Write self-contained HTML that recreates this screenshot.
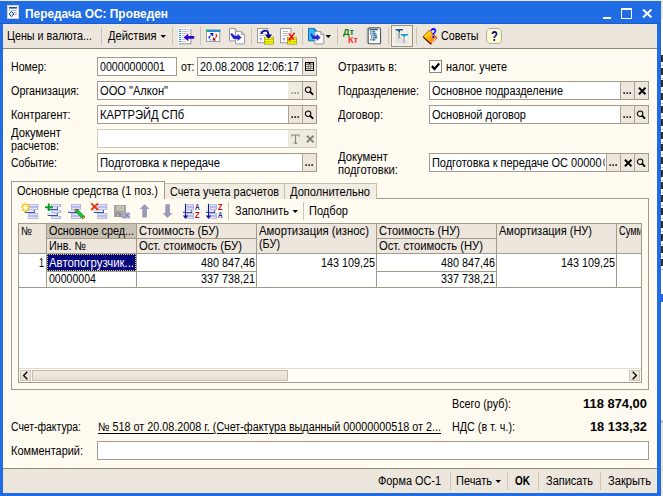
<!DOCTYPE html><html><head><meta charset="utf-8"><title>Передача ОС</title><style>
html,body{margin:0;padding:0}
body{width:663px;height:496px;overflow:hidden;position:relative;background:#ECE9D8;font-family:"Liberation Sans",sans-serif;font-size:12px;color:#000}
.b{position:absolute;display:block}
.t{position:absolute;white-space:nowrap;line-height:14px;transform-origin:0 0;display:block}
.bd{font-weight:bold}
.w{color:#fff}
.u{text-decoration:underline;text-underline-offset:2px;text-decoration-thickness:1px}
.g{color:#8a8478}
.clip{width:2.2px;overflow:hidden}

</style></head><body>
<div class="b" style="left:0px;top:1px;width:661px;height:495px;background:#1F6CE4;"></div>
<div class="b" style="left:3px;top:24px;width:654px;height:469px;background:#FFFBF0;"></div>
<div class="b" style="left:661px;top:20px;width:2px;height:400px;background:#fff;"></div>
<div class="b" style="left:661px;top:55px;width:2px;height:7px;background:#2A2A2A;"></div>
<div class="b" style="left:661px;top:65px;width:2px;height:1px;background:#C8C8C8;"></div>
<div class="b" style="left:661px;top:68px;width:2px;height:7px;background:#2A2A2A;"></div>
<div class="b" style="left:661px;top:78px;width:2px;height:1px;background:#C8C8C8;"></div>
<div class="b" style="left:661px;top:80px;width:2px;height:7px;background:#2A2A2A;"></div>
<div class="b" style="left:661px;top:90px;width:2px;height:1px;background:#C8C8C8;"></div>
<div class="b" style="left:661px;top:93px;width:2px;height:7px;background:#2A2A2A;"></div>
<div class="b" style="left:661px;top:103px;width:2px;height:1px;background:#C8C8C8;"></div>
<div class="b" style="left:661px;top:106px;width:2px;height:7px;background:#2A2A2A;"></div>
<div class="b" style="left:661px;top:116px;width:2px;height:1px;background:#C8C8C8;"></div>
<div class="b" style="left:661px;top:119px;width:2px;height:7px;background:#2A2A2A;"></div>
<div class="b" style="left:661px;top:129px;width:2px;height:1px;background:#C8C8C8;"></div>
<div class="b" style="left:661px;top:132px;width:2px;height:7px;background:#2A2A2A;"></div>
<div class="b" style="left:661px;top:142px;width:2px;height:1px;background:#C8C8C8;"></div>
<div class="b" style="left:661px;top:144px;width:2px;height:7px;background:#2A2A2A;"></div>
<div class="b" style="left:661px;top:154px;width:2px;height:1px;background:#C8C8C8;"></div>
<div class="b" style="left:661px;top:157px;width:2px;height:7px;background:#2A2A2A;"></div>
<div class="b" style="left:661px;top:167px;width:2px;height:1px;background:#C8C8C8;"></div>
<div class="b" style="left:661px;top:170px;width:2px;height:7px;background:#2A2A2A;"></div>
<div class="b" style="left:661px;top:180px;width:2px;height:1px;background:#C8C8C8;"></div>
<div class="b" style="left:661px;top:182px;width:2px;height:7px;background:#2A2A2A;"></div>
<div class="b" style="left:661px;top:192px;width:2px;height:1px;background:#C8C8C8;"></div>
<div class="b" style="left:661px;top:195px;width:2px;height:7px;background:#2A2A2A;"></div>
<div class="b" style="left:661px;top:205px;width:2px;height:1px;background:#C8C8C8;"></div>
<div class="b" style="left:661px;top:208px;width:2px;height:7px;background:#2A2A2A;"></div>
<div class="b" style="left:661px;top:218px;width:2px;height:1px;background:#C8C8C8;"></div>
<div class="b" style="left:661px;top:221px;width:2px;height:7px;background:#2A2A2A;"></div>
<div class="b" style="left:661px;top:231px;width:2px;height:1px;background:#C8C8C8;"></div>
<div class="b" style="left:661px;top:234px;width:2px;height:7px;background:#2A2A2A;"></div>
<div class="b" style="left:661px;top:244px;width:2px;height:1px;background:#C8C8C8;"></div>
<div class="b" style="left:661px;top:246px;width:2px;height:7px;background:#2A2A2A;"></div>
<div class="b" style="left:661px;top:256px;width:2px;height:1px;background:#C8C8C8;"></div>
<div class="b" style="left:661px;top:259px;width:2px;height:7px;background:#2A2A2A;"></div>
<div class="b" style="left:661px;top:269px;width:2px;height:1px;background:#C8C8C8;"></div>
<div class="b" style="left:661px;top:294px;width:2px;height:8px;background:#2A62D8;"></div>
<div class="b" style="left:661px;top:420px;width:2px;height:3px;background:#C8C4B8;"></div>
<div class="b" style="left:3px;top:24px;width:654px;height:24px;background:#ECE6DC;"></div>
<div class="b" style="left:3px;top:48px;width:654px;height:1px;background:#8E8573;"></div>
<div class="b" style="left:3px;top:468px;width:654px;height:1px;background:#8E8573;"></div>
<div class="b" style="left:3px;top:469px;width:654px;height:24px;background:#ECE6DC;"></div>
<div class="b" style="left:0px;top:23px;width:661px;height:1px;background:#1B5BCB;"></div>
<div class="b" style="left:603px;top:17px;width:8px;height:2px;background:#fff;"></div>
<div class="b" style="left:621px;top:8px;width:11px;height:11px;border:1px solid #fff;border-top-width:2px;box-sizing:border-box;"></div>
<svg class="b" style="left:642px;top:9px" width="11" height="9" viewBox="0 0 11 9"><path d="M1 0.5 L9.5 8.5 M9.5 0.5 L1 8.5" stroke="#fff" stroke-width="2" fill="none"/></svg>
<div class="b" style="left:101px;top:27px;width:1px;height:18px;background:#CCC5B7;"></div>
<div class="b" style="left:172px;top:27px;width:1px;height:18px;background:#CCC5B7;"></div>
<div class="b" style="left:200px;top:27px;width:1px;height:18px;background:#CCC5B7;"></div>
<div class="b" style="left:251px;top:27px;width:1px;height:18px;background:#CCC5B7;"></div>
<div class="b" style="left:302px;top:27px;width:1px;height:18px;background:#CCC5B7;"></div>
<div class="b" style="left:337px;top:27px;width:1px;height:18px;background:#CCC5B7;"></div>
<div class="b" style="left:388px;top:27px;width:1px;height:18px;background:#CCC5B7;"></div>
<div class="b" style="left:416px;top:27px;width:1px;height:18px;background:#CCC5B7;"></div>
<svg class="b" style="left:160px;top:35px" width="7" height="4" viewBox="0 0 7 4"><path d="M0.5 0 H6 L3.25 3 Z" fill="#000"/></svg>
<svg class="b" style="left:325px;top:35px" width="7" height="4" viewBox="0 0 7 4"><path d="M0.5 0 H6 L3.25 3 Z" fill="#000"/></svg>
<div class="b" style="left:391px;top:25px;width:22px;height:22px;background:#F4F0E6;border:1px solid #9A917F;box-sizing:border-box;"></div>
<div class="b" style="left:97px;top:57px;width:80px;height:19px;background:#fff;border:1px solid #A29A8C;box-sizing:border-box;"></div>
<div class="b" style="left:197px;top:57px;width:120px;height:19px;background:#fff;border:1px solid #A29A8C;box-sizing:border-box;"></div>
<div class="b" style="left:302px;top:58px;width:1px;height:17px;background:#ACA494;"></div>
<div class="b" style="left:303px;top:58px;width:13px;height:17px;background:#ECE6DC;"></div>
<svg class="b" style="left:305px;top:62px" width="10" height="10" viewBox="0 0 10 10"><rect x="0.5" y="0.5" width="8" height="8" fill="#F0EBE0" stroke="#000" stroke-width="1"/><rect x="0" y="0" width="9" height="1.2" fill="#000"/><rect x="3.7" y="1" width="1.6" height="1.2" fill="#000"/><path d="M1 2.6 H8 M1 4.6 H8 M1 6.5 H8" stroke="#000" stroke-width="0.5" stroke-opacity="0.85"/><path d="M3.3 2.4 V8 M5.7 2.4 V8" stroke="#000" stroke-width="0.5" stroke-opacity="0.85"/></svg>
<div class="b" style="left:97px;top:81px;width:220px;height:19px;background:#fff;border:1px solid #A29A8C;box-sizing:border-box;"></div>
<div class="b" style="left:288px;top:82px;width:1px;height:17px;background:#EDE8DC;"></div>
<div class="b" style="left:289px;top:82px;width:13px;height:17px;background:#EFEBE2;"></div>
<svg class="b" style="left:290px;top:92px" width="11" height="3" viewBox="0 0 11 3"><rect x="1.4" y="0.3" width="1.5" height="1.6" fill="#8a8478"/><rect x="4.4" y="0.3" width="1.5" height="1.6" fill="#8a8478"/><rect x="7.4" y="0.3" width="1.5" height="1.6" fill="#8a8478"/></svg>
<div class="b" style="left:302px;top:82px;width:1px;height:17px;background:#ACA494;"></div>
<div class="b" style="left:303px;top:82px;width:13px;height:17px;background:#ECE6DC;"></div>
<svg class="b" style="left:304px;top:85px" width="13" height="12" viewBox="0 0 13 12"><circle cx="4.1" cy="4.8" r="2.75" fill="none" stroke="#000" stroke-width="1.05"/><path d="M6.3 7 L8.6 9.2" stroke="#000" stroke-width="1.8" stroke-linecap="round"/></svg>
<div class="b" style="left:97px;top:105px;width:220px;height:19px;background:#fff;border:1px solid #A29A8C;box-sizing:border-box;"></div>
<div class="b" style="left:288px;top:106px;width:1px;height:17px;background:#ACA494;"></div>
<div class="b" style="left:289px;top:106px;width:13px;height:17px;background:#ECE6DC;"></div>
<svg class="b" style="left:290px;top:116px" width="11" height="3" viewBox="0 0 11 3"><rect x="1.4" y="0.3" width="1.5" height="1.6" fill="#000"/><rect x="4.4" y="0.3" width="1.5" height="1.6" fill="#000"/><rect x="7.4" y="0.3" width="1.5" height="1.6" fill="#000"/></svg>
<div class="b" style="left:302px;top:106px;width:1px;height:17px;background:#ACA494;"></div>
<div class="b" style="left:303px;top:106px;width:13px;height:17px;background:#ECE6DC;"></div>
<svg class="b" style="left:304px;top:109px" width="13" height="12" viewBox="0 0 13 12"><circle cx="4.1" cy="4.8" r="2.75" fill="none" stroke="#000" stroke-width="1.05"/><path d="M6.3 7 L8.6 9.2" stroke="#000" stroke-width="1.8" stroke-linecap="round"/></svg>
<div class="b" style="left:97px;top:129px;width:220px;height:19px;background:#fff;border:1px solid #D0CABD;box-sizing:border-box;"></div>
<div class="b" style="left:288px;top:130px;width:1px;height:17px;background:#EDE8DC;"></div>
<div class="b" style="left:289px;top:130px;width:13px;height:17px;background:#EFEBE2;"></div>
<svg class="b" style="left:290px;top:133px" width="11" height="12" viewBox="0 0 11 12"><path d="M1.8 3.6 V2 H9.2 V3.6 M5.5 2 V10 M3.8 10.1 H7.2" stroke="#8a8478" stroke-width="1.1" fill="none"/></svg>
<div class="b" style="left:302px;top:130px;width:1px;height:17px;background:#EDE8DC;"></div>
<div class="b" style="left:303px;top:130px;width:13px;height:17px;background:#EFEBE2;"></div>
<svg class="b" style="left:306px;top:135px" width="9" height="8" viewBox="0 0 9 8"><path d="M0.9 0.8 L7.5 7.2 M7.5 0.8 L0.9 7.2" stroke="#8a8478" stroke-width="1.9" fill="none"/></svg>
<div class="b" style="left:97px;top:153px;width:220px;height:19px;background:#fff;border:1px solid #A29A8C;box-sizing:border-box;"></div>
<div class="b" style="left:302px;top:154px;width:1px;height:17px;background:#ACA494;"></div>
<div class="b" style="left:303px;top:154px;width:13px;height:17px;background:#ECE6DC;"></div>
<svg class="b" style="left:304px;top:164px" width="11" height="3" viewBox="0 0 11 3"><rect x="1.4" y="0.3" width="1.5" height="1.6" fill="#000"/><rect x="4.4" y="0.3" width="1.5" height="1.6" fill="#000"/><rect x="7.4" y="0.3" width="1.5" height="1.6" fill="#000"/></svg>
<div class="b" style="left:429px;top:60px;width:13px;height:13px;background:#fff;border:1px solid #8E8573;box-sizing:border-box;"></div>
<svg class="b" style="left:431px;top:62px" width="9" height="9" viewBox="0 0 9 9"><path d="M0.9 3.9 L3.5 6.9 L8.2 1.4" stroke="#000" stroke-width="2.3" fill="none"/></svg>
<div class="b" style="left:429px;top:81px;width:220px;height:19px;background:#fff;border:1px solid #A29A8C;box-sizing:border-box;"></div>
<div class="b" style="left:620px;top:82px;width:1px;height:17px;background:#ACA494;"></div>
<div class="b" style="left:621px;top:82px;width:13px;height:17px;background:#ECE6DC;"></div>
<svg class="b" style="left:622px;top:92px" width="11" height="3" viewBox="0 0 11 3"><rect x="1.4" y="0.3" width="1.5" height="1.6" fill="#000"/><rect x="4.4" y="0.3" width="1.5" height="1.6" fill="#000"/><rect x="7.4" y="0.3" width="1.5" height="1.6" fill="#000"/></svg>
<div class="b" style="left:634px;top:82px;width:1px;height:17px;background:#ACA494;"></div>
<div class="b" style="left:635px;top:82px;width:13px;height:17px;background:#ECE6DC;"></div>
<svg class="b" style="left:638px;top:87px" width="9" height="8" viewBox="0 0 9 8"><path d="M0.9 0.8 L7.5 7.2 M7.5 0.8 L0.9 7.2" stroke="#000" stroke-width="1.9" fill="none"/></svg>
<div class="b" style="left:429px;top:105px;width:220px;height:19px;background:#fff;border:1px solid #A29A8C;box-sizing:border-box;"></div>
<div class="b" style="left:620px;top:106px;width:1px;height:17px;background:#ACA494;"></div>
<div class="b" style="left:621px;top:106px;width:13px;height:17px;background:#ECE6DC;"></div>
<svg class="b" style="left:622px;top:116px" width="11" height="3" viewBox="0 0 11 3"><rect x="1.4" y="0.3" width="1.5" height="1.6" fill="#000"/><rect x="4.4" y="0.3" width="1.5" height="1.6" fill="#000"/><rect x="7.4" y="0.3" width="1.5" height="1.6" fill="#000"/></svg>
<div class="b" style="left:634px;top:106px;width:1px;height:17px;background:#ACA494;"></div>
<div class="b" style="left:635px;top:106px;width:13px;height:17px;background:#ECE6DC;"></div>
<svg class="b" style="left:636px;top:109px" width="13" height="12" viewBox="0 0 13 12"><circle cx="4.1" cy="4.8" r="2.75" fill="none" stroke="#000" stroke-width="1.05"/><path d="M6.3 7 L8.6 9.2" stroke="#000" stroke-width="1.8" stroke-linecap="round"/></svg>
<div class="b" style="left:429px;top:153px;width:220px;height:19px;background:#fff;border:1px solid #A29A8C;box-sizing:border-box;"></div>
<div class="b" style="left:606px;top:154px;width:1px;height:17px;background:#ACA494;"></div>
<div class="b" style="left:607px;top:154px;width:13px;height:17px;background:#ECE6DC;"></div>
<svg class="b" style="left:608px;top:164px" width="11" height="3" viewBox="0 0 11 3"><rect x="1.4" y="0.3" width="1.5" height="1.6" fill="#000"/><rect x="4.4" y="0.3" width="1.5" height="1.6" fill="#000"/><rect x="7.4" y="0.3" width="1.5" height="1.6" fill="#000"/></svg>
<div class="b" style="left:620px;top:154px;width:1px;height:17px;background:#ACA494;"></div>
<div class="b" style="left:621px;top:154px;width:13px;height:17px;background:#ECE6DC;"></div>
<svg class="b" style="left:624px;top:159px" width="9" height="8" viewBox="0 0 9 8"><path d="M0.9 0.8 L7.5 7.2 M7.5 0.8 L0.9 7.2" stroke="#000" stroke-width="1.9" fill="none"/></svg>
<div class="b" style="left:634px;top:154px;width:1px;height:17px;background:#ACA494;"></div>
<div class="b" style="left:635px;top:154px;width:13px;height:17px;background:#ECE6DC;"></div>
<svg class="b" style="left:636px;top:157px" width="13" height="12" viewBox="0 0 13 12"><circle cx="4.1" cy="4.8" r="2.75" fill="none" stroke="#000" stroke-width="1.05"/><path d="M6.3 7 L8.6 9.2" stroke="#000" stroke-width="1.8" stroke-linecap="round"/></svg>
<div class="b" style="left:11px;top:198px;width:638px;height:192px;background:#FFFBF0;border:1px solid #A29A8C;box-sizing:border-box;"></div>
<div class="b" style="left:164px;top:183px;width:121px;height:16px;background:#F2EDE2;border:1px solid #C6BFB0;box-sizing:border-box;border-bottom:none;"></div>
<div class="b" style="left:284px;top:183px;width:93px;height:16px;background:#F2EDE2;border:1px solid #C6BFB0;box-sizing:border-box;border-bottom:none;"></div>
<div class="b" style="left:11px;top:181px;width:154px;height:18px;background:#FFFBF0;border:1px solid #A29A8C;box-sizing:border-box;border-bottom:none;"></div>
<div class="b" style="left:228px;top:202px;width:1px;height:18px;background:#CCC5B7;"></div>
<div class="b" style="left:303px;top:202px;width:1px;height:18px;background:#CCC5B7;"></div>
<svg class="b" style="left:292px;top:210px" width="7" height="4" viewBox="0 0 7 4"><path d="M0.5 0 H6 L3.25 3 Z" fill="#000"/></svg>
<div class="b" style="left:18px;top:223px;width:624px;height:160px;background:#fff;border:1px solid #A29A8C;box-sizing:border-box;"></div>
<div class="b" style="left:19px;top:224px;width:622px;height:29px;background:#ECE6DC;"></div>
<div class="b" style="left:47px;top:224px;width:89px;height:14px;background:#C9C2B4;"></div>
<div class="b" style="left:46px;top:224px;width:1px;height:63px;background:#A29A8C;"></div>
<div class="b" style="left:136px;top:224px;width:1px;height:63px;background:#A29A8C;"></div>
<div class="b" style="left:256px;top:224px;width:1px;height:63px;background:#A29A8C;"></div>
<div class="b" style="left:376px;top:224px;width:1px;height:63px;background:#A29A8C;"></div>
<div class="b" style="left:496px;top:224px;width:1px;height:63px;background:#A29A8C;"></div>
<div class="b" style="left:616px;top:224px;width:1px;height:63px;background:#A29A8C;"></div>
<div class="b" style="left:19px;top:253px;width:622px;height:1px;background:#A29A8C;"></div>
<div class="b" style="left:47px;top:238px;width:89px;height:1px;background:#A29A8C;"></div>
<div class="b" style="left:137px;top:238px;width:119px;height:1px;background:#A29A8C;"></div>
<div class="b" style="left:377px;top:238px;width:119px;height:1px;background:#A29A8C;"></div>
<div class="b" style="left:47px;top:271px;width:89px;height:1px;background:#A29A8C;"></div>
<div class="b" style="left:137px;top:271px;width:119px;height:1px;background:#A29A8C;"></div>
<div class="b" style="left:377px;top:271px;width:119px;height:1px;background:#A29A8C;"></div>
<div class="b" style="left:19px;top:287px;width:622px;height:1px;background:#A29A8C;"></div>
<div class="b" style="left:642px;top:224px;width:6px;height:29px;background:#FFFBF0;"></div>
<div class="b" style="left:641px;top:223px;width:1px;height:160px;background:#A29A8C;"></div>
<div class="b" style="left:47px;top:254px;width:89px;height:17px;background:#08087E;outline:1px dotted #E8D870;outline-offset:-1px;"></div>
<div class="b" style="left:19px;top:368px;width:622px;height:14px;background:#FFFDF5;"></div>
<div class="b" style="left:19px;top:368px;width:622px;height:1px;background:#E2DCCF;"></div>
<div class="b" style="left:20px;top:370px;width:11px;height:11px;background:#ECE6DC;border:1px solid #CFC8BA;box-sizing:border-box;background:linear-gradient(#EFEAE1,#E6DFD3);"></div>
<svg class="b" style="left:22px;top:371px" width="7" height="9" viewBox="0 0 7 9"><path d="M5.3 0.8 L1.6 4.5 L5.3 8.2" stroke="#000" stroke-width="1.3" fill="none"/></svg>
<div class="b" style="left:629px;top:370px;width:11px;height:11px;background:#ECE6DC;border:1px solid #CFC8BA;box-sizing:border-box;background:linear-gradient(#EFEAE1,#E6DFD3);"></div>
<svg class="b" style="left:631px;top:371px" width="7" height="9" viewBox="0 0 7 9"><path d="M1.7 0.8 L5.4 4.5 L1.7 8.2" stroke="#000" stroke-width="1.3" fill="none"/></svg>
<div class="b" style="left:32px;top:370px;width:256px;height:11px;background:#ECE6DC;border:1px solid #C4BCAD;box-sizing:border-box;background:linear-gradient(#EFEAE1,#E6DFD3);"></div>
<div class="b" style="left:97px;top:441px;width:552px;height:19px;background:#fff;border:1px solid #A29A8C;box-sizing:border-box;"></div>
<div class="b" style="left:450px;top:472px;width:1px;height:18px;background:#CCC5B7;"></div>
<div class="b" style="left:507px;top:472px;width:1px;height:18px;background:#CCC5B7;"></div>
<div class="b" style="left:538px;top:472px;width:1px;height:18px;background:#CCC5B7;"></div>
<div class="b" style="left:600px;top:472px;width:1px;height:18px;background:#CCC5B7;"></div>
<svg class="b" style="left:495px;top:480px" width="7" height="4" viewBox="0 0 7 4"><path d="M0.5 0 H6 L3.25 3 Z" fill="#000"/></svg>
<svg class="b" style="left:7px;top:5px" width="12" height="14" viewBox="0 0 12 14"><rect x="0.5" y="0.5" width="11" height="13" fill="#fff" stroke="#D9CFBC"/>
<rect x="2" y="2" width="8" height="1.6" fill="#1F4E8C"/>
<path d="M4.5 6.3 L6.8 9 L4.5 11.7 L2.2 9 Z" fill="#D8F4FA" stroke="#1F3F8C" stroke-width="1"/>
<path d="M2 5.5 H3 M6 5.5 H9.5 M7 7.5 H9.5 M7.5 9.5 H9.5" stroke="#9A8AD8" stroke-width="0.9"/>
<path d="M3.5 5.5 H6" stroke="#A8ECF4" stroke-width="0.9"/></svg>
<svg class="b" style="left:177px;top:27px" width="18" height="18" viewBox="0 0 18 18"><rect x="2" y="2" width="12.5" height="15.3" fill="#A0A0A0"/><rect x="1" y="1" width="12.3" height="15.2" fill="#fff"/><rect x="2" y="2" width="2.2" height="1" fill="#2596DC"/><rect x="5" y="2" width="7" height="1" fill="#C8C8C8"/><rect x="2" y="4" width="2.2" height="1" fill="#2596DC"/><rect x="5" y="4" width="7" height="1" fill="#C8C8C8"/><rect x="2" y="6" width="2.2" height="1" fill="#2596DC"/><rect x="5" y="6" width="5" height="1" fill="#C8C8C8"/><rect x="2" y="8" width="2.2" height="1" fill="#2596DC"/><rect x="5" y="8" width="3" height="1" fill="#C8C8C8"/><rect x="2" y="10" width="2.2" height="1" fill="#2596DC"/><rect x="5" y="10" width="1" height="1" fill="#C8C8C8"/><rect x="2" y="12" width="2.2" height="1" fill="#2596DC"/><rect x="5" y="12" width="3" height="1" fill="#C8C8C8"/><rect x="2" y="14" width="2.2" height="1" fill="#2596DC"/><rect x="5" y="14" width="4" height="1" fill="#C8C8C8"/>
<path d="M6.6 10.4 L11.3 6.6 V9.1 H17.2 V11.8 H11.3 V14.2 Z" fill="#3404CC"/></svg>
<svg class="b" style="left:205px;top:29px" width="17" height="14" viewBox="0 0 17 14"><rect x="1.5" y="1.2" width="13.3" height="11.3" fill="#fff" stroke="#9C9C9C" stroke-width="1"/>
<rect x="1" y="0.7" width="14.3" height="2.3" fill="#2090D0"/>
<rect x="1.6" y="1.4" width="1.6" height="1.6" fill="#10E010"/>
<path d="M4.5 4 H8.3 V7.6 Z" fill="#0808A0"/>
<path d="M7 5.5 L4.6 7.7" stroke="#205090" stroke-width="1" fill="none"/>
<path d="M4.3 7.2 V9.6" stroke="#0A0AFF" stroke-width="1.4" fill="none"/>
<path d="M4.8 10.2 L6.3 11.5" stroke="#40A8F0" stroke-width="1.2" fill="none"/>
<path d="M9.6 4.1 L10.6 4.8" stroke="#FF9060" stroke-width="1" fill="none"/>
<path d="M11.4 5.2 V8.2" stroke="#FF1010" stroke-width="1.4" fill="none"/>
<path d="M11 8.5 L9.4 10" stroke="#902020" stroke-width="1" fill="none"/>
<path d="M7.8 8 L11.2 11.4 H7.8 Z" fill="#8C0404"/></svg>
<svg class="b" style="left:228px;top:27px" width="18" height="18" viewBox="0 0 18 18"><path d="M1.5 1.5 H7.1 L10.1 4.5 V13.9 H1.5 Z" fill="#fff" stroke="#9A9A9A" stroke-width="1"/><path d="M7.1 1.5 V4.5 H10.1" fill="none" stroke="#9A9A9A" stroke-width="1"/><path d="M7.6 4.6 H13.600000000000001 L16.6 7.6 V16.9 H7.6 Z" fill="#fff" stroke="#9A9A9A" stroke-width="1"/><path d="M13.600000000000001 4.6 V7.6 H16.6" fill="none" stroke="#9A9A9A" stroke-width="1"/><path d="M2.3 7.3 L3.9 5.9 L6.6 8.7 H9.6 V6.7 L13.6 10.4 L9.6 14 V11.9 H5.6 Z" fill="#2424D0"/></svg>
<svg class="b" style="left:256px;top:27px" width="18" height="18" viewBox="0 0 18 18"><rect x="1.5" y="1.5" width="10.4" height="14.2" fill="#fff" stroke="#989898" stroke-width="1"/><path d="M3.5 4.5 H9.0 M3.5 6.5 H9.0 M3.5 8.5 H9.0" stroke="#B8B8B8" stroke-width="0.9"/><path d="M4.9 10.3 L6.5 12.1 L4.9 14.1 L3.3 12.1 Z" fill="#A8A8FF"/><rect x="8.5" y="10.3" width="9" height="6.8" fill="#FFFF10" stroke="#9C9C10" stroke-width="0.8"/><path d="M8.5 12.600000000000001 H17.5 M8.5 14.8 H17.5" stroke="#A8A810" stroke-width="0.8"/><path d="M5 7 Q6.5 3.4 9.6 3.7 Q12.4 4 12.4 8" fill="none" stroke="#04049C" stroke-width="1.7"/><path d="M8.8 7.6 H16.2 L12.5 11.8 Z" fill="#04049C"/></svg>
<svg class="b" style="left:279px;top:27px" width="18" height="18" viewBox="0 0 18 18"><rect x="1.5" y="1.5" width="10.4" height="14.2" fill="#fff" stroke="#989898" stroke-width="1"/><path d="M3.5 4.5 H9.0 M3.5 6.5 H9.0 M3.5 8.5 H9.0" stroke="#B8B8B8" stroke-width="0.9"/><path d="M4.9 10.3 L6.5 12.1 L4.9 14.1 L3.3 12.1 Z" fill="#A8A8FF"/><rect x="8.5" y="10.3" width="9" height="6.8" fill="#FFFF10" stroke="#9C9C10" stroke-width="0.8"/><path d="M8.5 12.600000000000001 H17.5 M8.5 14.8 H17.5" stroke="#A8A810" stroke-width="0.8"/><path d="M9.8 6.6 L14.6 12.4 M15.6 5.8 L10.4 13" stroke="#FF0808" stroke-width="1.5" fill="none"/><rect x="9.6" y="11" width="2" height="2.6" fill="#FF0808"/></svg>
<svg class="b" style="left:307px;top:27px" width="18" height="18" viewBox="0 0 18 18"><path d="M1.5 1.4 H7.300000000000001 L10.3 4.4 V13.8 H1.5 Z" fill="#28C0FF" stroke="#1C6CAC" stroke-width="1"/><path d="M7.300000000000001 1.4 V4.4 H10.3" fill="none" stroke="#1C6CAC" stroke-width="1"/><path d="M7.8 4.6 H13.8 L16.8 7.6 V16.9 H7.8 Z" fill="#fff" stroke="#9A9A9A" stroke-width="1"/><path d="M13.8 4.6 V7.6 H16.8" fill="none" stroke="#9A9A9A" stroke-width="1"/><path d="M3.3 7.6 L3.9 5.9 L6.6 8.7 H9.6 V6.7 L13.6 10.4 L9.6 14 V11.9 H5.6 Z" fill="#2C2CD0"/></svg>
<svg class="b" style="left:365px;top:27px" width="18" height="18" viewBox="0 0 18 18"><rect x="1.2" y="1.2" width="2.2" height="15.4" fill="#CDCDCD"/><rect x="15.4" y="1.2" width="1.4" height="15.4" fill="#DCDCDC"/>
<rect x="3.2" y="0.9" width="12.3" height="15.8" rx="1.3" fill="#fff" stroke="#585858" stroke-width="1.1"/><rect x="4.4" y="2" width="8.4" height="1.3" fill="#1C5C8C"/><rect x="5.2" y="4.2" width="1.3" height="1.3" fill="#1C5C8C"/><rect x="7.2" y="4.2" width="3" height="1.3" fill="#1C5C8C"/><rect x="5.2" y="6.2" width="1.3" height="1.3" fill="#1C5C8C"/><rect x="7.2" y="6.2" width="4.2" height="1.3" fill="#1C5C8C"/><rect x="6.2" y="8.2" width="1.3" height="1.3" fill="#1C5C8C"/><rect x="8.2" y="8.2" width="4" height="1.3" fill="#1C5C8C"/><rect x="6.2" y="10.2" width="1.3" height="1.3" fill="#1C5C8C"/><rect x="8.2" y="10.2" width="4" height="1.3" fill="#1C5C8C"/><rect x="5.2" y="12.2" width="1.3" height="1.3" fill="#1C5C8C"/><rect x="7.2" y="12.2" width="3" height="1.3" fill="#1C5C8C"/></svg>
<svg class="b" style="left:393px;top:27px" width="18" height="18" viewBox="0 0 18 18"><path d="M2.2 3.6 L16.6 16.4 H2.2 Z" fill="#E2E2E2"/>
<rect x="5.2" y="6" width="1.7" height="5.6" fill="#A4A4A4"/><rect x="10.2" y="11" width="1.6" height="5.2" fill="#B8B8B8"/>
<path d="M2.6 2.1 H10 V3.6 H7.2 L6.4 6.4 L4.6 3.6 H2.6 Z" fill="#1F5C9E"/>
<path d="M8 6.9 H15.2 V8.6 H12.4 L11.4 11.2 L9.8 8.6 H8 Z" fill="#0C9CDC"/></svg>
<svg class="b" style="left:422px;top:27px" width="18" height="18" viewBox="0 0 18 18"><defs><linearGradient id="bk" x1="0.15" y1="0.2" x2="0.8" y2="0.9"><stop offset="0" stop-color="#FFF000"/><stop offset="0.45" stop-color="#FFB010"/><stop offset="1" stop-color="#FF6A10"/></linearGradient></defs>
<path d="M1 9.6 L7.4 3.2 L15.2 11 L9.2 17 Z" fill="url(#bk)" stroke="#B03C04" stroke-width="0.9"/>
<path d="M1 9.9 L9 17.2" stroke="#5A1C04" stroke-width="1.2"/>
<path d="M10 15.6 L14.2 11.4" stroke="#fff" stroke-width="1.3" stroke-dasharray="1 0.7"/></svg>
<svg class="b" style="left:485px;top:27px" width="18" height="18" viewBox="0 0 18 18"><path d="M3.8 1.6 H14.2 L16.4 3.8 V14.2 L14.2 16.4 H3.8 L1.6 14.2 V3.8 Z" fill="#FFFFD2" stroke="#A8A8A8" stroke-width="1"/></svg>
<svg class="b" style="left:20px;top:202px" width="20" height="18" viewBox="0 0 20 18"><rect x="8.2" y="2" width="10" height="2.8" fill="#A4A4DC"/><rect x="8.7" y="2.4" width="9" height="1.9" fill="#C4C4F0"/><rect x="9.2" y="2.9" width="7.6" height="0.8" fill="#F4F4FF"/><rect x="8.2" y="5" width="10" height="2.8" fill="#A4A4DC"/><rect x="8.7" y="5.4" width="9" height="1.9" fill="#C4C4F0"/><rect x="9.2" y="5.9" width="7.6" height="0.8" fill="#F4F4FF"/><rect x="4.799999999999999" y="8" width="10" height="3" fill="#1F4C8C"/><rect x="4.799999999999999" y="8" width="9.2" height="2.1" fill="#D4D4F8"/><rect x="5.399999999999999" y="8.7" width="7.6" height="0.8" fill="#fff"/><rect x="8.2" y="11" width="10" height="2.8" fill="#A4A4DC"/><rect x="8.7" y="11.4" width="9" height="1.9" fill="#C4C4F0"/><rect x="9.2" y="11.9" width="7.6" height="0.8" fill="#F4F4FF"/><rect x="8.2" y="14" width="10" height="2.8" fill="#A4A4DC"/><rect x="8.7" y="14.4" width="9" height="1.9" fill="#C4C4F0"/><rect x="9.2" y="14.9" width="7.6" height="0.8" fill="#F4F4FF"/><path d="M5.5 1 L6.4 3.2 L8.6 2.2 L7.7 4.5 L9.8 5.5 L7.7 6.4 L8.6 8.7 L6.4 7.8 L5.5 10 L4.6 7.8 L2.4 8.7 L3.3 6.4 L1.2 5.5 L3.3 4.5 L2.4 2.2 L4.6 3.2 Z" fill="#FFFFD0" stroke="#FFC000" stroke-width="1"/></svg>
<svg class="b" style="left:43px;top:202px" width="20" height="18" viewBox="0 0 20 18"><rect x="8.2" y="2" width="10" height="2.8" fill="#A4A4DC"/><rect x="8.7" y="2.4" width="9" height="1.9" fill="#C4C4F0"/><rect x="9.2" y="2.9" width="7.6" height="0.8" fill="#F4F4FF"/><rect x="4.799999999999999" y="5" width="10" height="3" fill="#1F4C8C"/><rect x="4.799999999999999" y="5" width="9.2" height="2.1" fill="#D4D4F8"/><rect x="5.399999999999999" y="5.7" width="7.6" height="0.8" fill="#fff"/><rect x="8.2" y="8" width="10" height="2.8" fill="#A4A4DC"/><rect x="8.7" y="8.4" width="9" height="1.9" fill="#C4C4F0"/><rect x="9.2" y="8.9" width="7.6" height="0.8" fill="#F4F4FF"/><rect x="4.799999999999999" y="11" width="10" height="3" fill="#1F4C8C"/><rect x="4.799999999999999" y="11" width="9.2" height="2.1" fill="#D4D4F8"/><rect x="5.399999999999999" y="11.7" width="7.6" height="0.8" fill="#fff"/><rect x="8.2" y="14" width="10" height="2.8" fill="#A4A4DC"/><rect x="8.7" y="14.4" width="9" height="1.9" fill="#C4C4F0"/><rect x="9.2" y="14.9" width="7.6" height="0.8" fill="#F4F4FF"/><path d="M5.8 1.4 V9 M2 5.2 H9.8" stroke="#04A024" stroke-width="2" fill="none"/></svg>
<svg class="b" style="left:66px;top:202px" width="20" height="18" viewBox="0 0 20 18"><rect x="5" y="2" width="10" height="2.8" fill="#A4A4DC"/><rect x="5.5" y="2.4" width="9" height="1.9" fill="#C4C4F0"/><rect x="6" y="2.9" width="7.6" height="0.8" fill="#F4F4FF"/><rect x="5" y="5" width="10" height="2.8" fill="#A4A4DC"/><rect x="5.5" y="5.4" width="9" height="1.9" fill="#C4C4F0"/><rect x="6" y="5.9" width="7.6" height="0.8" fill="#F4F4FF"/><rect x="2" y="8" width="10" height="3" fill="#1F4C8C"/><rect x="2" y="8" width="9.2" height="2.1" fill="#D4D4F8"/><rect x="2.6" y="8.7" width="7.6" height="0.8" fill="#fff"/><rect x="5" y="11" width="10" height="2.8" fill="#A4A4DC"/><rect x="5.5" y="11.4" width="9" height="1.9" fill="#C4C4F0"/><rect x="6" y="11.9" width="7.6" height="0.8" fill="#F4F4FF"/><rect x="5" y="14" width="10" height="2.8" fill="#A4A4DC"/><rect x="5.5" y="14.4" width="9" height="1.9" fill="#C4C4F0"/><rect x="6" y="14.9" width="7.6" height="0.8" fill="#F4F4FF"/><path d="M9.6 9.6 L11.8 7.6 L18.2 14 L16 16.2 Z" fill="#10C840" stroke="#087820" stroke-width="0.6"/><path d="M9 7.4 L12 7.4 L9.4 10 Z" fill="#FFFF20" stroke="#202000" stroke-width="0.6"/><path d="M15.8 16 L18 13.8 L18.9 15 L17 17 Z" fill="#FFFF20" stroke="#202000" stroke-width="0.6"/></svg>
<svg class="b" style="left:89px;top:202px" width="20" height="18" viewBox="0 0 20 18"><rect x="8.3" y="2" width="10" height="2.8" fill="#A4A4DC"/><rect x="8.8" y="2.4" width="9" height="1.9" fill="#C4C4F0"/><rect x="9.3" y="2.9" width="7.6" height="0.8" fill="#F4F4FF"/><rect x="8.3" y="5" width="10" height="2.8" fill="#A4A4DC"/><rect x="8.8" y="5.4" width="9" height="1.9" fill="#C4C4F0"/><rect x="9.3" y="5.9" width="7.6" height="0.8" fill="#F4F4FF"/><rect x="4.9" y="8" width="10" height="3" fill="#1F4C8C"/><rect x="4.9" y="8" width="9.2" height="2.1" fill="#D4D4F8"/><rect x="5.5" y="8.7" width="7.6" height="0.8" fill="#fff"/><rect x="8.3" y="11" width="10" height="2.8" fill="#A4A4DC"/><rect x="8.8" y="11.4" width="9" height="1.9" fill="#C4C4F0"/><rect x="9.3" y="11.9" width="7.6" height="0.8" fill="#F4F4FF"/><rect x="8.3" y="14" width="10" height="2.8" fill="#A4A4DC"/><rect x="8.8" y="14.4" width="9" height="1.9" fill="#C4C4F0"/><rect x="9.3" y="14.9" width="7.6" height="0.8" fill="#F4F4FF"/><path d="M2.2 1.4 L9 8 M9 1.4 L2.2 8" stroke="#EC3404" stroke-width="1.9" fill="none"/></svg>
<svg class="b" style="left:113px;top:203px" width="18" height="17" viewBox="0 0 18 17"><rect x="1" y="2" width="12" height="12" fill="#A2A2A2"/>
<rect x="3.4" y="3" width="7.6" height="4.6" fill="#CACABC"/><rect x="4.4" y="4.4" width="5.6" height="1.4" fill="#B4B4A8"/>
<rect x="3" y="10" width="6" height="4" fill="#8C8C8C"/><rect x="4" y="11" width="1.6" height="2.4" fill="#C8C8C8"/>
<rect x="8.4" y="9.2" width="8.8" height="6.4" fill="#C4C4DC"/></svg>
<svg class="b" style="left:138px;top:203px" width="13" height="16" viewBox="0 0 13 16"><path d="M6.5 1 L11.4 6 H8.9 V14.6 H4.3 V6 H1.7 Z" fill="#9A9ABA"/></svg>
<svg class="b" style="left:161px;top:203px" width="13" height="16" viewBox="0 0 13 16"><path d="M6.5 15 L11.4 10 H8.9 V1.2 H4.3 V10 H1.7 Z" fill="#9A9ABA"/></svg>
<svg class="b" style="left:182px;top:202px" width="19" height="18" viewBox="0 0 19 18"><rect x="4.7" y="2" width="7.2" height="2.8" fill="#A4A4DC"/><rect x="5.2" y="2.4" width="6.2" height="1.9" fill="#C4C4F0"/><rect x="5.7" y="2.9" width="4.800000000000001" height="0.8" fill="#F4F4FF"/><rect x="4.7" y="5" width="7.2" height="2.8" fill="#A4A4DC"/><rect x="5.2" y="5.4" width="6.2" height="1.9" fill="#C4C4F0"/><rect x="5.7" y="5.9" width="4.800000000000001" height="0.8" fill="#F4F4FF"/><rect x="1" y="8" width="9.2" height="3" fill="#1F4C8C"/><rect x="1" y="8" width="8.399999999999999" height="2.1" fill="#D4D4F8"/><rect x="1.6" y="8.7" width="6.799999999999999" height="0.8" fill="#fff"/><rect x="4.7" y="11" width="7.2" height="2.8" fill="#A4A4DC"/><rect x="5.2" y="11.4" width="6.2" height="1.9" fill="#C4C4F0"/><rect x="5.7" y="11.9" width="4.800000000000001" height="0.8" fill="#F4F4FF"/><rect x="4.7" y="14" width="7.2" height="2.8" fill="#A4A4DC"/><rect x="5.2" y="14.4" width="6.2" height="1.9" fill="#C4C4F0"/><rect x="5.7" y="14.9" width="4.800000000000001" height="0.8" fill="#F4F4FF"/><path d="M3.5 1.8 V15" stroke="#1414A0" stroke-width="1.1" fill="none"/><path d="M0.8 13.4 H6.2 L3.5 17 Z" fill="#1414A0"/></svg>
<svg class="b" style="left:205px;top:202px" width="19" height="18" viewBox="0 0 19 18"><rect x="4.7" y="2" width="7.2" height="2.8" fill="#A4A4DC"/><rect x="5.2" y="2.4" width="6.2" height="1.9" fill="#C4C4F0"/><rect x="5.7" y="2.9" width="4.800000000000001" height="0.8" fill="#F4F4FF"/><rect x="4.7" y="5" width="7.2" height="2.8" fill="#A4A4DC"/><rect x="5.2" y="5.4" width="6.2" height="1.9" fill="#C4C4F0"/><rect x="5.7" y="5.9" width="4.800000000000001" height="0.8" fill="#F4F4FF"/><rect x="1" y="8" width="9.2" height="3" fill="#1F4C8C"/><rect x="1" y="8" width="8.399999999999999" height="2.1" fill="#D4D4F8"/><rect x="1.6" y="8.7" width="6.799999999999999" height="0.8" fill="#fff"/><rect x="4.7" y="11" width="7.2" height="2.8" fill="#A4A4DC"/><rect x="5.2" y="11.4" width="6.2" height="1.9" fill="#C4C4F0"/><rect x="5.7" y="11.9" width="4.800000000000001" height="0.8" fill="#F4F4FF"/><rect x="4.7" y="14" width="7.2" height="2.8" fill="#A4A4DC"/><rect x="5.2" y="14.4" width="6.2" height="1.9" fill="#C4C4F0"/><rect x="5.7" y="14.9" width="4.800000000000001" height="0.8" fill="#F4F4FF"/><path d="M3.5 1.8 V15" stroke="#1414A0" stroke-width="1.1" fill="none"/><path d="M0.8 13.4 H6.2 L3.5 17 Z" fill="#1414A0"/></svg>
<span class="t bd w" style="left:25px;top:6.50px;font-size:13px;transform:scaleX(0.9147);">Передача ОС: Проведен</span>
<span class="t" style="left:7px;top:28.84px;transform:scaleX(0.8959);">Цены и валюта...</span>
<span class="t" style="left:108px;top:28.84px;transform:scaleX(0.9224);">Действия</span>
<span class="t" style="left:441px;top:28.84px;transform:scaleX(0.8932);">Советы</span>
<span class="t" style="left:11px;top:59.84px;transform:scaleX(0.8813);">Номер:</span>
<span class="t" style="left:11px;top:83.84px;transform:scaleX(0.8981);">Организация:</span>
<span class="t" style="left:11px;top:107.84px;transform:scaleX(0.9099);">Контрагент:</span>
<span class="t" style="left:11px;top:125.84px;transform:scaleX(0.9392);">Документ</span>
<span class="t" style="left:11px;top:138.84px;transform:scaleX(0.8975);">расчетов:</span>
<span class="t" style="left:11px;top:155.84px;transform:scaleX(0.8672);">Событие:</span>
<span class="t" style="left:100px;top:59.84px;transform:scaleX(0.8853);">00000000001</span>
<span class="t" style="left:181px;top:59.84px;transform:scaleX(0.8852);">от:</span>
<span class="t" style="left:200px;top:59.84px;transform:scaleX(0.8991);">20.08.2008 12:06:17</span>
<span class="t" style="left:100px;top:83.84px;transform:scaleX(0.9246);">ООО "Алкон"</span>
<span class="t" style="left:100px;top:107.84px;transform:scaleX(0.9264);">КАРТРЭЙД СПб</span>
<span class="t" style="left:100px;top:155.84px;transform:scaleX(0.9399);">Подготовка к передаче</span>
<span class="t" style="left:338px;top:59.84px;transform:scaleX(0.9070);">Отразить в:</span>
<span class="t" style="left:338px;top:83.84px;transform:scaleX(0.8923);">Подразделение:</span>
<span class="t" style="left:338px;top:107.84px;transform:scaleX(0.9249);">Договор:</span>
<span class="t" style="left:338px;top:149.84px;transform:scaleX(0.9392);">Документ</span>
<span class="t" style="left:338px;top:162.84px;transform:scaleX(0.9354);">подготовки:</span>
<span class="t" style="left:446px;top:59.84px;transform:scaleX(0.9069);">налог. учете</span>
<span class="t" style="left:432px;top:83.84px;transform:scaleX(0.9120);">Основное подразделение</span>
<span class="t" style="left:432px;top:107.84px;transform:scaleX(0.9179);">Основной договор</span>
<span class="t" style="left:432px;top:155.84px;transform:scaleX(0.9127);">Подготовка к передаче ОС 00000</span>
<span class="t clip" style="left:603px;top:155.84px;transform:scaleX(0.8800);">0</span>
<span class="t" style="left:17px;top:184.44px;transform:scaleX(0.9157);">Основные средства (1 поз.)</span>
<span class="t" style="left:170px;top:184.84px;transform:scaleX(0.9047);">Счета учета расчетов</span>
<span class="t" style="left:290px;top:184.84px;transform:scaleX(0.9262);">Дополнительно</span>
<span class="t" style="left:235px;top:204.34px;transform:scaleX(0.9165);">Заполнить</span>
<span class="t" style="left:309px;top:204.34px;transform:scaleX(0.9227);">Подбор</span>
<span class="t" style="left:21px;top:223.84px;transform:scaleX(0.8544);">№</span>
<span class="t" style="left:49px;top:223.84px;transform:scaleX(0.9004);">Основное сред...</span>
<span class="t" style="left:49px;top:238.84px;transform:scaleX(0.8987);">Инв. №</span>
<span class="t" style="left:139px;top:223.84px;transform:scaleX(0.9235);">Стоимость (БУ)</span>
<span class="t" style="left:139px;top:238.84px;transform:scaleX(0.9352);">Ост. стоимость (БУ)</span>
<span class="t" style="left:259px;top:223.84px;transform:scaleX(0.9432);">Амортизация (износ)</span>
<span class="t" style="left:259px;top:236.84px;transform:scaleX(0.9044);">(БУ)</span>
<span class="t" style="left:379px;top:223.84px;transform:scaleX(0.9236);">Стоимость (НУ)</span>
<span class="t" style="left:379px;top:238.84px;transform:scaleX(0.9352);">Ост. стоимость (НУ)</span>
<span class="t" style="left:499px;top:223.84px;transform:scaleX(0.9171);">Амортизация (НУ)</span>
<span class="t" style="left:619px;top:223.84px;width:28.45px;overflow:hidden;transform:scaleX(0.7734);">Сумм</span>
<span class="t w" style="left:49px;top:255.84px;transform:scaleX(0.9491);">Автопогрузчик...</span>
<span class="t" style="left:49px;top:271.84px;transform:scaleX(0.8803);">00000004</span>
<span class="t" style="left:39.0px;top:255.84px;transform:scaleX(0.7477);">1</span>
<span class="t" style="left:201.0px;top:255.84px;transform:scaleX(0.8991);">480 847,46</span>
<span class="t" style="left:201.0px;top:271.84px;transform:scaleX(0.8991);">337 738,21</span>
<span class="t" style="left:321.0px;top:255.84px;transform:scaleX(0.8991);">143 109,25</span>
<span class="t" style="left:441.0px;top:255.84px;transform:scaleX(0.8991);">480 847,46</span>
<span class="t" style="left:441.0px;top:271.84px;transform:scaleX(0.8991);">337 738,21</span>
<span class="t" style="left:561.0px;top:255.84px;transform:scaleX(0.8991);">143 109,25</span>
<span class="t" style="left:452px;top:396.84px;transform:scaleX(0.8984);">Всего (руб):</span>
<span class="t bd" style="left:583.0px;top:396.84px;transform:scaleX(1.0773);">118 874,00</span>
<span class="t" style="left:452px;top:419.84px;transform:scaleX(0.8968);">НДС (в т. ч.):</span>
<span class="t bd" style="left:590.0px;top:419.84px;transform:scaleX(1.0676);">18 133,32</span>
<span class="t" style="left:11px;top:419.84px;transform:scaleX(0.8677);">Счет-фактура:</span>
<span class="t u" style="left:98px;top:419.84px;transform:scaleX(0.8986);">№ 518 от 20.08.2008 г. (Счет-фактура выданный 00000000518 от 2...</span>
<span class="t" style="left:11px;top:443.84px;transform:scaleX(0.9123);">Комментарий:</span>
<span class="t" style="left:378px;top:473.84px;transform:scaleX(0.9077);">Форма ОС-1</span>
<span class="t" style="left:456px;top:473.84px;transform:scaleX(0.9157);">Печать</span>
<span class="t bd" style="left:515px;top:473.84px;transform:scaleX(0.8333);">OK</span>
<span class="t" style="left:546px;top:473.84px;transform:scaleX(0.9165);">Записать</span>
<span class="t" style="left:608px;top:473.84px;transform:scaleX(0.9304);">Закрыть</span>
<span class="t bd" style="left:430px;top:26.45px;font-size:14px;color:#0404FF;transform:scaleX(0.7708);">?</span>
<span class="t bd" style="left:490.6px;top:29.15px;font-size:14px;color:#04048C;transform:scaleX(0.7942);">?</span>
<span class="t bd" style="left:343px;top:24.88px;font-size:9px;color:#0C7C0C;transform:scaleX(1.0159);">Дт</span>
<span class="t bd" style="left:348px;top:32.88px;font-size:9px;color:#F83030;transform:scaleX(1.0095);">Кт</span>
<span class="t bd" style="left:122px;top:208.77px;font-size:7px;color:#7A7AA8;transform:scaleX(0.7238);">OK</span>
<span class="t bd" style="left:194.8px;top:199.88px;font-size:9px;color:#1A1A8C;transform:scaleX(0.7077);">A</span>
<span class="t bd" style="left:194.8px;top:207.88px;font-size:9px;color:#D40404;transform:scaleX(0.8364);">Z</span>
<span class="t bd" style="left:217.8px;top:199.88px;font-size:9px;color:#D40404;transform:scaleX(0.8364);">Z</span>
<span class="t bd" style="left:217.8px;top:207.88px;font-size:9px;color:#1A1A8C;transform:scaleX(0.7077);">A</span>
</body></html>
